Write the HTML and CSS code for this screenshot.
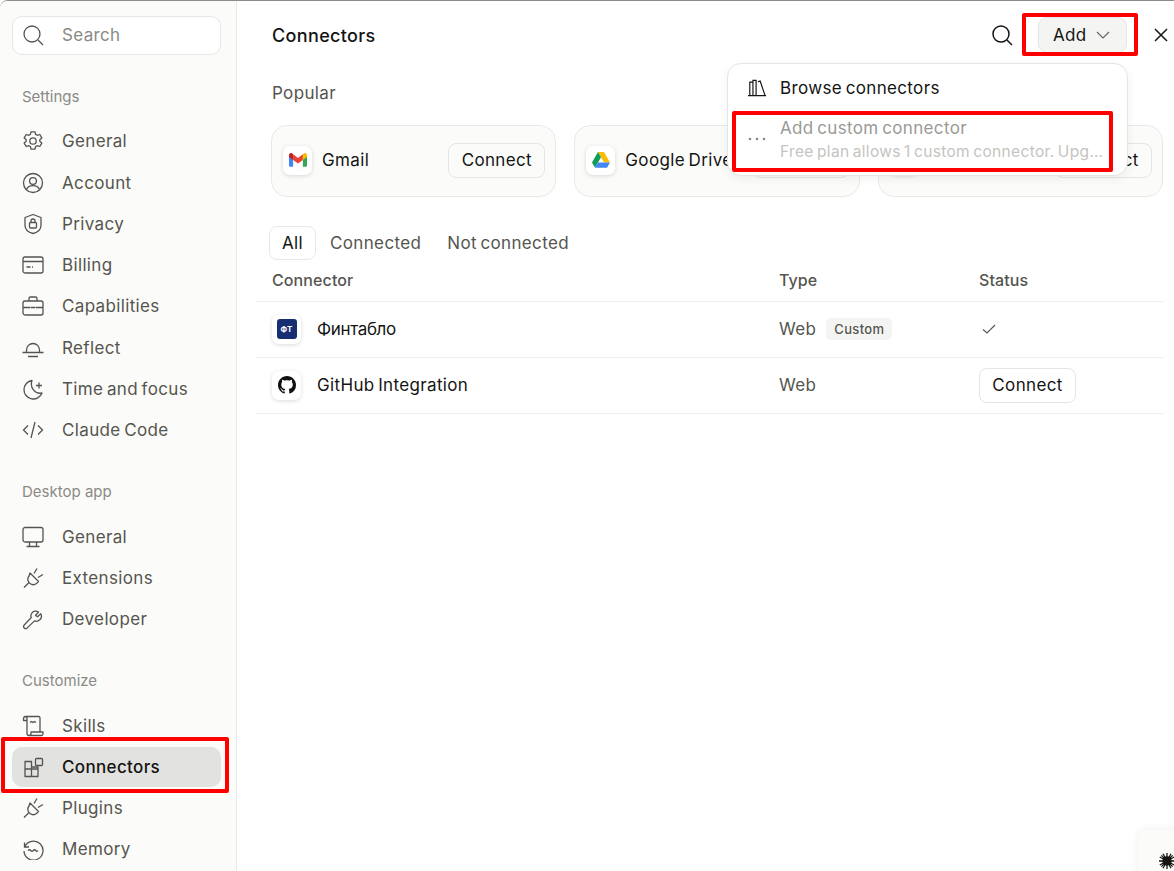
FILE: index.html
```html
<!DOCTYPE html>
<html lang="en">
<head>
<meta charset="utf-8">
<title>Connectors</title>
<link rel="stylesheet" href="styles.css">
</head>
<body>
<div class="app">
  <aside class="sidebar">
    <div class="search">
      <svg class="ico" viewBox="0 0 22 22"><circle cx="10" cy="10" r="8"/><path d="M16 16l5 5"/></svg>
      <span>Search</span>
    </div>
    <section class="group">
      <h2>Settings</h2>
      <ul>
        <li><svg class="ico" viewBox="0 0 22 22"><circle cx="11" cy="11" r="3.2"/><path d="M9 1.800h4l.6 2.600 1.600.9 2.600-.8 2 3.400-2 1.800v1.600l2 1.800-2 3.400-2.600-.8-1.600.9-.6 2.600H9l-.6-2.600-1.600-.9-2.600.8-2-3.400 2-1.800v-1.600l-2-1.800 2-3.400 2.600.8 1.600-.9z" stroke-linejoin="round"/></svg>General</li>
        <li><svg class="ico" viewBox="0 0 22 22"><circle cx="11" cy="11" r="9.500"/><circle cx="11" cy="9" r="3.400"/><path d="M4.500 17.500c1.200-2.600 3.600-3.800 6.500-3.800s5.300 1.200 6.500 3.800"/></svg>Account</li>
        <li><svg class="ico" viewBox="0 0 22 22"><path d="M11 1.500l8 3v8c0 4-3.500 6.800-8 8-4.500-1.200-8-4-8-8v-8z" stroke-linejoin="round"/><rect x="7.500" y="9.500" width="7" height="5.500" rx="1"/><path d="M9 9.500V8a2 2 0 014 0v1.500"/></svg>Privacy</li>
        <li><svg class="ico" viewBox="0 0 22 22"><rect x="1" y="3" width="20" height="16" rx="2"/><path d="M1 7.500h20M4.500 13h4M10 13h1"/></svg>Billing</li>
        <li><svg class="ico" viewBox="0 0 22 22"><rect x="1" y="6" width="20" height="14" rx="2"/><path d="M7 6V3.500A1.500 1.500 0 018.500 2h5A1.500 1.500 0 0115 3.500V6M1 12.500h7.500M13.500 12.500H21M9 12.500h4"/></svg>Capabilities</li>
        <li><svg class="ico" viewBox="0 0 22 22"><path d="M4.500 15.500V13a6.500 6.500 0 0113 0v2.500M.5 15.500h21M6 19.500h10"/></svg>Reflect</li>
        <li><svg class="ico" viewBox="0 0 22 22"><path d="M10 2.500a9.300 9.300 0 1010 12.500C13.500 16.500 7.500 10 10 2.500z" stroke-linejoin="round"/><path d="M17 4.500v6M14 7.500h6"/></svg>Time and focus</li>
        <li><svg class="ico" viewBox="0 0 22 22"><path d="M6 6.500L1.500 11 6 15.500M16 6.500l4.500 4.500-4.500 4.500M13 3l-4 16"/></svg>Claude Code</li>
      </ul>
    </section>
    <section class="group">
      <h2>Desktop app</h2>
      <ul>
        <li><svg class="ico" viewBox="0 0 22 22"><rect x="1" y="1.500" width="20" height="14.500" rx="2"/><path d="M7.500 16v4.500M14.500 16v4.500M4.500 20.500h13"/></svg>General</li>
        <li><svg class="ico" viewBox="0 0 22 22"><path d="M8 6l8.500 8.500-2 2c-2 1.500-4.500 1.500-6.500 0l-1-1c-1.500-2-1.500-4.500 0-6.500zM12 6.500l3-5M16 10.500l5-3M6.500 16L2 20.500" stroke-linejoin="round"/></svg>Extensions</li>
        <li><svg class="ico" viewBox="0 0 22 22"><path d="M13.500 7.500l3-3.500c-2-1.500-5-1-6.500.8-1.200 1.500-1.300 3.500-.7 4.700L2.200 17c-.9 1-.8 2.300 0 3 .8.800 2 .8 3-.1l7.300-7c1.500.6 3.500.4 5-.8 1.800-1.500 2.300-4.300 1.300-6.300l-3.300 3z" stroke-linejoin="round"/></svg>Developer</li>
      </ul>
    </section>
    <section class="group">
      <h2>Customize</h2>
      <ul>
        <li><svg class="ico" viewBox="0 0 22 22"><path d="M3.500 1.500h13c1 0 1.500.7 1.500 1.500v14M3.500 1.500C2 1.500 1.500 2.500 1.500 4v1.500H5V4M3.500 1.500C5 1.500 5 3 5 4v14.500c0 1 1 2 2 2h12.500c1 0 1.500-1 1.500-2V17H9v1.500c0 1-.7 2-2 2M8 7.500l1.500-1 1.500 1 1.500-1 1.500 1" stroke-linejoin="round"/></svg>Skills</li>
        <li class="active"><svg class="ico" viewBox="0 0 22 22"><path d="M3 5.500h6.500v5.500H16v9.500H3zM3 13h6.500v7.500M9.500 11v2M9.500 13H16" stroke-linejoin="round"/><rect x="13.500" y="2.500" width="7" height="7" rx="1"/></svg>Connectors</li>
        <li><svg class="ico" viewBox="0 0 22 22"><path d="M8 6l8.500 8.500-2 2c-2 1.500-4.500 1.500-6.500 0l-1-1c-1.500-2-1.500-4.500 0-6.500zM12 6.500l3-5M16 10.500l5-3M6.500 16L2 20.500" stroke-linejoin="round"/></svg>Plugins</li>
        <li><svg class="ico" viewBox="0 0 22 22"><path d="M2.500 4.500V9H7M2.700 9a9.500 9.500 0 11-.7 4"/><path d="M6 12.500c1.200-1 2-1 2.800 0s1.600 1 2.500 0 1.700-1 2.500 0 1.500 1 2.200 0"/></svg>Memory</li>
      </ul>
    </section>
  </aside>

  <main class="main">
    <header class="top">
      <h1>Connectors</h1>
      <svg class="top-search" viewBox="0 0 22 22"><circle cx="10" cy="10" r="8"/><path d="M16 16l5 5"/></svg>
      <button class="add">Add<svg viewBox="0 0 14 8"><path d="M1 1l6 6 6-6"/></svg></button>
      <svg class="close" viewBox="0 0 16 16"><path d="M2 2l12 12M14 2L2 14"/></svg>
    </header>

    <h2 class="popular">Popular</h2>
    <div class="cards">
      <div class="card">
        <span class="logo"><svg viewBox="0 0 18 14"><path d="M0 2.600V12.500c0 .8.600 1.300 1.300 1.300h2.800V6.500z" fill="#4285f4"/><path d="M13.900 6.500v7.300h2.800c.7 0 1.300-.5 1.300-1.300V2.600z" fill="#34a853"/><path d="M4.100 6.900V1.300L9 5l4.900-3.700v5.600L9 10.600z" fill="#ea4335"/><path d="M13.900 1.300v5.600L18 3.800V2C18 .4 16.100-.5 14.800.5z" fill="#fbbc04"/><path d="M0 3.800l4.100 3.100V1.300L3.200.5C1.900-.5 0 .4 0 2z" fill="#c5221f"/></svg></span>
        <span class="card-name">Gmail</span>
        <button class="btn">Connect</button>
      </div>
      <div class="card">
        <span class="logo"><svg viewBox="0 0 18 16"><path d="M6 0h6l6 10.500h-6z" fill="#fbbc04"/><path d="M6 0L0 10.500l3 5.200 6-10.500z" fill="#0f9d58"/><path d="M6 10.500h12l-3 5.200H3z" fill="#4285f4"/></svg></span>
        <span class="card-name">Google Drive</span>
        <button class="btn">Connect</button>
      </div>
      <div class="card">
        <span class="logo"></span>
        <span class="card-name"></span>
        <button class="btn">Connect</button>
      </div>
    </div>

    <nav class="tabs">
      <span class="tab selected">All</span>
      <span class="tab">Connected</span>
      <span class="tab">Not connected</span>
    </nav>

    <div class="row head"><span>Connector</span><span>Type</span><span>Status</span></div>
    <div class="row">
      <span class="name"><span class="logo small"><span class="ft">ФТ</span></span><span class="cyr">Финтабло</span></span>
      <span class="type">Web<span class="tag">Custom</span></span>
      <span><svg class="check" viewBox="0 0 14 10"><path d="M1 5.500L5 9l8-8"/></svg></span>
    </div>
    <div class="row">
      <span class="name"><span class="logo small"><svg viewBox="0 0 16 16"><path fill="#111" d="M8 0C3.580 0 0 3.580 0 8c0 3.540 2.290 6.530 5.470 7.590.4.070.55-.17.55-.38 0-.19-.01-.82-.01-1.490-2.010.37-2.530-.49-2.690-.94-.09-.23-.48-.94-.82-1.130-.28-.15-.68-.52-.01-.53.63-.01 1.080.58 1.230.82.720 1.210 1.870.870 2.330.660.070-.520.280-.870.510-1.070-1.780-.2-3.640-.89-3.640-3.950 0-.870.310-1.590.820-2.150-.080-.2-.360-1.020.080-2.120 0 0 .670-.210 2.200.820.640-.180 1.320-.270 2-.270s1.360.090 2 .270c1.530-1.040 2.200-.820 2.200-.820.440 1.100.160 1.920.080 2.120.510.560.820 1.270.820 2.150 0 3.070-1.870 3.750-3.650 3.950.290.250.540.730.540 1.480 0 1.070-.010 1.930-.010 2.200 0 .210.150.460.550.380A8.010 8.010 0 0016 8c0-4.420-3.580-8-8-8z"/></svg></span>GitHub Integration</span>
      <span class="type">Web</span>
      <span><button class="btn white">Connect</button></span>
    </div>
  </main>
</div>

<div class="menu">
  <div class="menu-item">
    <svg class="menu-ico" viewBox="0 0 22 20"><path d="M1 18.500h20M3 18.500V3.500h3.500v15M6.500 18.500V1.500H10v17M12 3l2.500-.7 5.500 16.200"/></svg>
    <span>Browse connectors</span>
  </div>
  <div class="menu-item disabled">
    <svg class="dots" viewBox="0 0 20 4"><circle cx="3" cy="2" r="1.300"/><circle cx="10" cy="2" r="1.300"/><circle cx="17" cy="2" r="1.300"/></svg>
    <span class="menu-text"><b>Add custom connector</b><small>Free plan allows 1 custom connector. Upgrade to add more.</small></span>
  </div>
</div>

<div class="mark red-add"></div>
<div class="mark red-custom"></div>
<div class="mark red-nav"></div>

<div class="corner"><svg viewBox="0 0 20 20"><path d="M10 0v20M0 10h20M3 3l14 14M17 3L3 17M5 1l10 18M15 1L5 19M1 5l18 10M19 5L1 15"/><circle cx="10" cy="10" r="5"/></svg></div>
</body>
</html>
```
FILE: styles.css
```css
* { box-sizing: border-box; }
html, body { margin: 0; height: 100%; }
body {
  position: relative;
  overflow: hidden;
  background: #fff;
  color: #141413;
  font-family: Inter, "Noto Sans", sans-serif;
  font-size: 17px;
  letter-spacing: .35px;
  word-spacing: -1.5px;
}
.app {
  display: flex;
  height: 871px;
  border-top: 1px solid #8c8c8a;
  border-top-left-radius: 8px;
  overflow: hidden;
}
.sidebar {
  flex: 0 0 237px;
  padding: 15px 15px 0 12px;
  background: #fbfbf9;
  border-right: 1px solid #e8e8e5;
}
.ico {
  flex: 0 0 22px;
  width: 22px;
  height: 22px;
  fill: none;
  stroke: #55554f;
  stroke-width: 1.3;
}
.search {
  display: flex;
  align-items: center;
  gap: 18px;
  height: 39px;
  padding: 0 0 1px 9px;
  background: #fff;
  border: 1px solid #e7e7e4;
  border-radius: 10px;
  color: #8a8a85;
}
.group { margin-top: 32px; }
.group + .group { margin-top: 32.25px; }
.group h2 {
  margin: 0 0 14.25px 10px;
  font-size: 15px;
  line-height: 20px;
  font-weight: 400;
  letter-spacing: 0;
  word-spacing: 0;
  color: #8a8a85;
}
.group ul {
  display: flex;
  flex-direction: column;
  gap: 1.25px;
  margin: 0;
  padding: 0;
  list-style: none;
}
.group li {
  display: flex;
  align-items: center;
  gap: 18px;
  height: 40px;
  padding-left: 10px;
  border-radius: 10px;
  color: #55554f;
}
.group li.active {
  background: #e2e2e0;
  color: #141413;
  font-weight: 500;
}
.main {
  flex: 1;
  min-width: 0;
  padding: 0 10px 0 19px;
  background: #fff;
}
.top {
  display: flex;
  align-items: center;
  height: 36px;
  margin-top: 16px;
  padding-left: 16px;
}
.top h1 {
  flex: 1;
  margin: 0;
  font-size: 18px;
  font-weight: 500;
}
.top-search {
  width: 22px;
  height: 22px;
  margin-right: 25px;
  fill: none;
  stroke: #141413;
  stroke-width: 1.5;
}
.add {
  display: flex;
  align-items: center;
  gap: 9px;
  width: 89px;
  height: 36px;
  padding: 0 0 0 14px;
  font: inherit;
  letter-spacing: inherit;
  color: #141413;
  background: #f4f4f2;
  border: 1px solid #e5e5e2;
  border-radius: 9px;
}
.add svg {
  width: 14px;
  height: 8px;
  fill: none;
  stroke: #666;
  stroke-width: 1.2;
}
.close {
  flex: none;
  width: 16px;
  height: 16px;
  margin: 0 -5px 0 26px;
  fill: none;
  stroke: #141413;
  stroke-width: 1.5;
}
.popular {
  margin: 29px 0 0 16px;
  font-size: 17px;
  line-height: 22px;
  font-weight: 400;
  color: #55554f;
}
.cards {
  display: grid;
  grid-template-columns: repeat(3, 1fr);
  gap: 18px;
  margin: 21px 1px 0 15px;
}
.card {
  display: flex;
  align-items: center;
  height: 72px;
  padding: 0 10px 2px 11px;
  background: #fbfbf9;
  border: 1px solid #e8e8e5;
  border-radius: 16px;
}
.logo {
  display: flex;
  flex: none;
  align-items: center;
  justify-content: center;
  width: 29px;
  height: 29px;
  margin-right: 10px;
  background: #fff;
  border-radius: 7px;
  box-shadow: 0 1px 4px rgba(0, 0, 0, .15);
}
.logo svg { width: 18px; height: 16px; }
.card-name { flex: 1; white-space: nowrap; }
.btn {
  height: 35px;
  width: 97px;
  padding: 0;
  font: inherit;
  letter-spacing: inherit;
  color: #141413;
  background: #fbfbf9;
  border: 1px solid #e5e5e2;
  border-radius: 8px;
}
.btn.white { background: #fff; }
.tabs {
  display: flex;
  align-items: center;
  gap: 2px;
  margin: 29px 0 0 13px;
  height: 34px;
  color: #55554f;
}
.tab { padding: 0 12px; }
.tab.selected {
  display: flex;
  align-items: center;
  height: 34px;
  padding: 0 12px;
  color: #141413;
  border: 1px solid #e8e8e5;
  border-radius: 8px;
}
.row {
  display: grid;
  grid-template-columns: 507px 200px 1fr;
  align-items: center;
  height: 56px;
  padding: 0 0 1px 16px;
  border-bottom: 1px solid #efefec;
}
.row.head {
  height: 42px;
  padding-bottom: 2px;
  font-size: 16px;
  font-weight: 500;
  letter-spacing: .1px;
  color: #55554f;
}
.name { display: flex; align-items: center; gap: 6px; }
.cyr { letter-spacing: -.35px; }
.logo.small svg { width: 18px; height: 18px; }
.ft {
  display: flex;
  align-items: center;
  justify-content: center;
  width: 20px;
  height: 20px;
  font-size: 8px;
  font-weight: 700;
  letter-spacing: 0;
  color: #fff;
  background: #182e72;
  border-radius: 3px;
}
.type { display: flex; align-items: center; gap: 10px; color: #55554f; }
.tag {
  padding: 2px 8px;
  font-size: 13px;
  line-height: 18px;
  font-weight: 500;
  background: #f4f4f2;
  border-radius: 5px;
}
.check {
  display: block;
  width: 14px;
  height: 10px;
  margin-left: 3px;
  fill: none;
  stroke: #55554f;
  stroke-width: 1.1;
}
.menu {
  position: absolute;
  top: 63px;
  left: 727px;
  width: 401px;
  height: 113px;
  padding: 4px 5px;
  background: #fff;
  border: 1px solid #e5e5e2;
  border-radius: 14px;
  box-shadow: 0 3px 10px rgba(0, 0, 0, .06);
}
.menu-item {
  display: flex;
  align-items: center;
  gap: 13px;
  height: 40px;
  padding-left: 14px;
}
.menu-ico {
  flex: none;
  width: 20px;
  height: 18px;
  fill: none;
  stroke: #141413;
  stroke-width: 1.3;
}
.menu-item.disabled { height: 56px; margin-top: 3px; color: #9a9a95; }
.dots { flex: none; width: 20px; height: 4px; fill: #8a8a85; }
.menu-text { min-width: 0; flex: 1; padding-right: 15px; }
.menu-text b { display: block; font-weight: 400; line-height: 24px; }
.menu-text small {
  display: block;
  margin-top: 1px;
  font-size: 15.5px;
  line-height: 22px;
  color: #c4c4c0;
  white-space: nowrap;
  overflow: hidden;
  text-overflow: ellipsis;
}
.mark {
  position: absolute;
  border: 4px solid #f00;
  border-radius: 2px;
}
.red-add { top: 13px; left: 1022px; width: 116px; height: 43px; }
.red-custom { top: 111px; left: 732px; width: 381px; height: 61px; }
.red-nav { top: 737px; left: 1px; width: 228px; height: 56px; }
.corner {
  position: absolute;
  top: 830px;
  left: 1138px;
  width: 60px;
  height: 60px;
  padding: 23px 0 0 21px;
  background: #fbfbf9;
  border-radius: 8px;
  box-shadow: 0 0 10px rgba(0, 0, 0, .07);
}
.corner svg {
  display: block;
  width: 16px;
  height: 16px;
  stroke: #141413;
  stroke-width: 1.6;
  fill: #141413;
}
```
